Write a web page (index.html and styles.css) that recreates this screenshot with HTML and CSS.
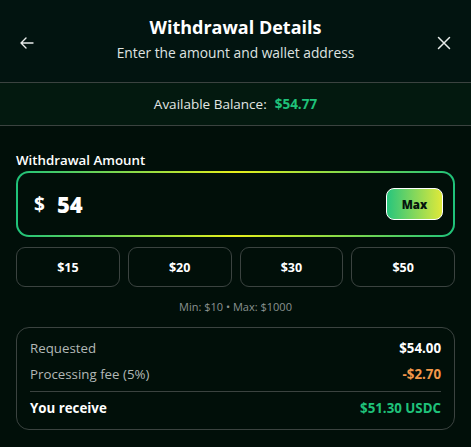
FILE: index.html
```html
<!DOCTYPE html>
<html>
<head>
<meta charset="utf-8">
<link rel="stylesheet" href="styles.css">
</head>
<body>
<div class="modal">
  <header class="header">
    <button class="icon-btn" aria-label="Back">
      <svg width="16" height="16" viewBox="0 0 16 16" fill="none" stroke="#e8ecea" stroke-width="1.4" stroke-linecap="round" stroke-linejoin="round"><path d="M14 8H2M7 3L2 8l5 5"/></svg>
    </button>
    <div class="titles">
      <h1 class="title">Withdrawal Details</h1>
      <p class="subtitle">Enter the amount and wallet address</p>
    </div>
    <button class="icon-btn" aria-label="Close">
      <svg width="14" height="14" viewBox="0 0 14 14" fill="none" stroke="#e8ecea" stroke-width="1.5" stroke-linecap="round"><path d="M1.5 1.5l11 11M12.5 1.5l-11 11"/></svg>
    </button>
  </header>
  <div class="balance">
    <span class="balance-label">Available Balance:</span>
    <span class="balance-value">$54.77</span>
  </div>
  <main class="content">
    <label class="field-label">Withdrawal Amount</label>
    <div class="amount-box">
      <span class="currency">$</span>
      <span class="amount">54</span>
      <button class="max-btn">Max</button>
    </div>
    <div class="presets">
      <button class="preset">$15</button>
      <button class="preset">$20</button>
      <button class="preset">$30</button>
      <button class="preset">$50</button>
    </div>
    <p class="limits">Min: $10 • Max: $1000</p>
    <div class="summary">
      <div class="row"><span class="muted">Requested</span><span class="strong">$54.00</span></div>
      <div class="row"><span class="muted">Processing fee (5%)</span><span class="fee">-$2.70</span></div>
      <div class="divider"></div>
      <div class="row total"><span class="strong">You receive</span><span class="green">$51.30 USDC</span></div>
    </div>
  </main>
</div>
</body>
</html>
```
FILE: styles.css
```css
* { box-sizing: border-box; }
html, body { margin: 0; padding: 0; }
body {
  background: #010f09;
  font-family: "Open Sans", "Noto Sans", sans-serif;
  color: #fff;
  width: 471px;
  height: 447px;
  overflow: hidden;
}
button { font-family: inherit; cursor: pointer; }
.modal { display: flex; flex-direction: column; }
.header {
  height: 83px;
  background: #021410;
  border-bottom: 1px solid #3b4340;
  display: flex;
  align-items: center;
  justify-content: space-between;
  padding: 0 19px 4px 19px;
}
.icon-btn {
  background: none;
  border: 0;
  padding: 0;
  width: 16px;
  height: 16px;
  display: flex;
  align-items: center;
  justify-content: center;
  margin-top: 8px;
}
.titles { text-align: center; }
.title {
  margin: 0;
  font-size: 18px;
  font-weight: 700;
  line-height: 22px;
  color: #fff;
}
.subtitle {
  margin: 6px 0 0;
  font-size: 13.8px;
  line-height: 18px;
  color: #dfe3e1;
}
.balance {
  height: 43px;
  background: #03190f;
  border-bottom: 1px solid #3b4340;
  display: flex;
  align-items: center;
  justify-content: center;
  gap: 8px;
  font-size: 13.5px;
  padding-bottom: 1px;
}
.balance-label { color: #e2e6e4; }
.balance-value { color: #1fc27a; font-weight: 700; }
.content {
  padding: 26px 16px 0;
  display: flex;
  flex-direction: column;
}
.field-label {
  font-size: 13.3px;
  font-weight: 600;
  line-height: 16px;
  color: #fff;
  margin-bottom: 3px;
}
.amount-box {
  height: 66px;
  border: 2px solid transparent;
  border-radius: 13px;
  background:
    linear-gradient(#010f09, #010f09) padding-box,
    linear-gradient(90deg, #1fc27a 0%, #e6ef1c 50%, #1fc27a 100%) border-box;
  display: flex;
  align-items: center;
  padding: 0 10px 0 16px;
}
.currency { font-size: 19px; font-weight: 700; margin-right: 12px; }
.amount { font-size: 22px; font-weight: 800; flex: 1; }
.max-btn {
  width: 57px;
  height: 32px;
  border: 1.5px solid #fff;
  border-radius: 8px;
  background: linear-gradient(90deg, #28c57d, #dfe93a);
  color: #06140d;
  font-weight: 800;
  font-size: 11.5px;
}
.presets {
  margin-top: 10px;
  display: grid;
  grid-template-columns: repeat(4, 1fr);
  gap: 8px;
}
.preset {
  height: 40px;
  background: transparent;
  border: 1px solid #3b4340;
  border-radius: 9px;
  color: #fff;
  font-weight: 700;
  font-size: 12.5px;
}
.limits {
  margin: 13px 0 0;
  text-align: center;
  font-size: 11px;
  color: #8a9290;
  line-height: 14px;
}
.summary {
  margin-top: 13px;
  border: 1px solid #3b4340;
  border-radius: 13px;
  padding: 7px 13px 9px;
  display: flex;
  flex-direction: column;
}
.row {
  display: flex;
  justify-content: space-between;
  align-items: center;
  font-size: 13.3px;
  line-height: 18px;
  height: 26px;
}
.muted { color: #b2b8b6; }
.strong { color: #fff; font-weight: 700; }
.fee { color: #f3984a; font-weight: 700; }
.green { color: #1fc27a; font-weight: 700; }
.divider { height: 1px; background: #3b4340; margin: 4px 0 4px; }
.row.total { height: 24px; }
```
